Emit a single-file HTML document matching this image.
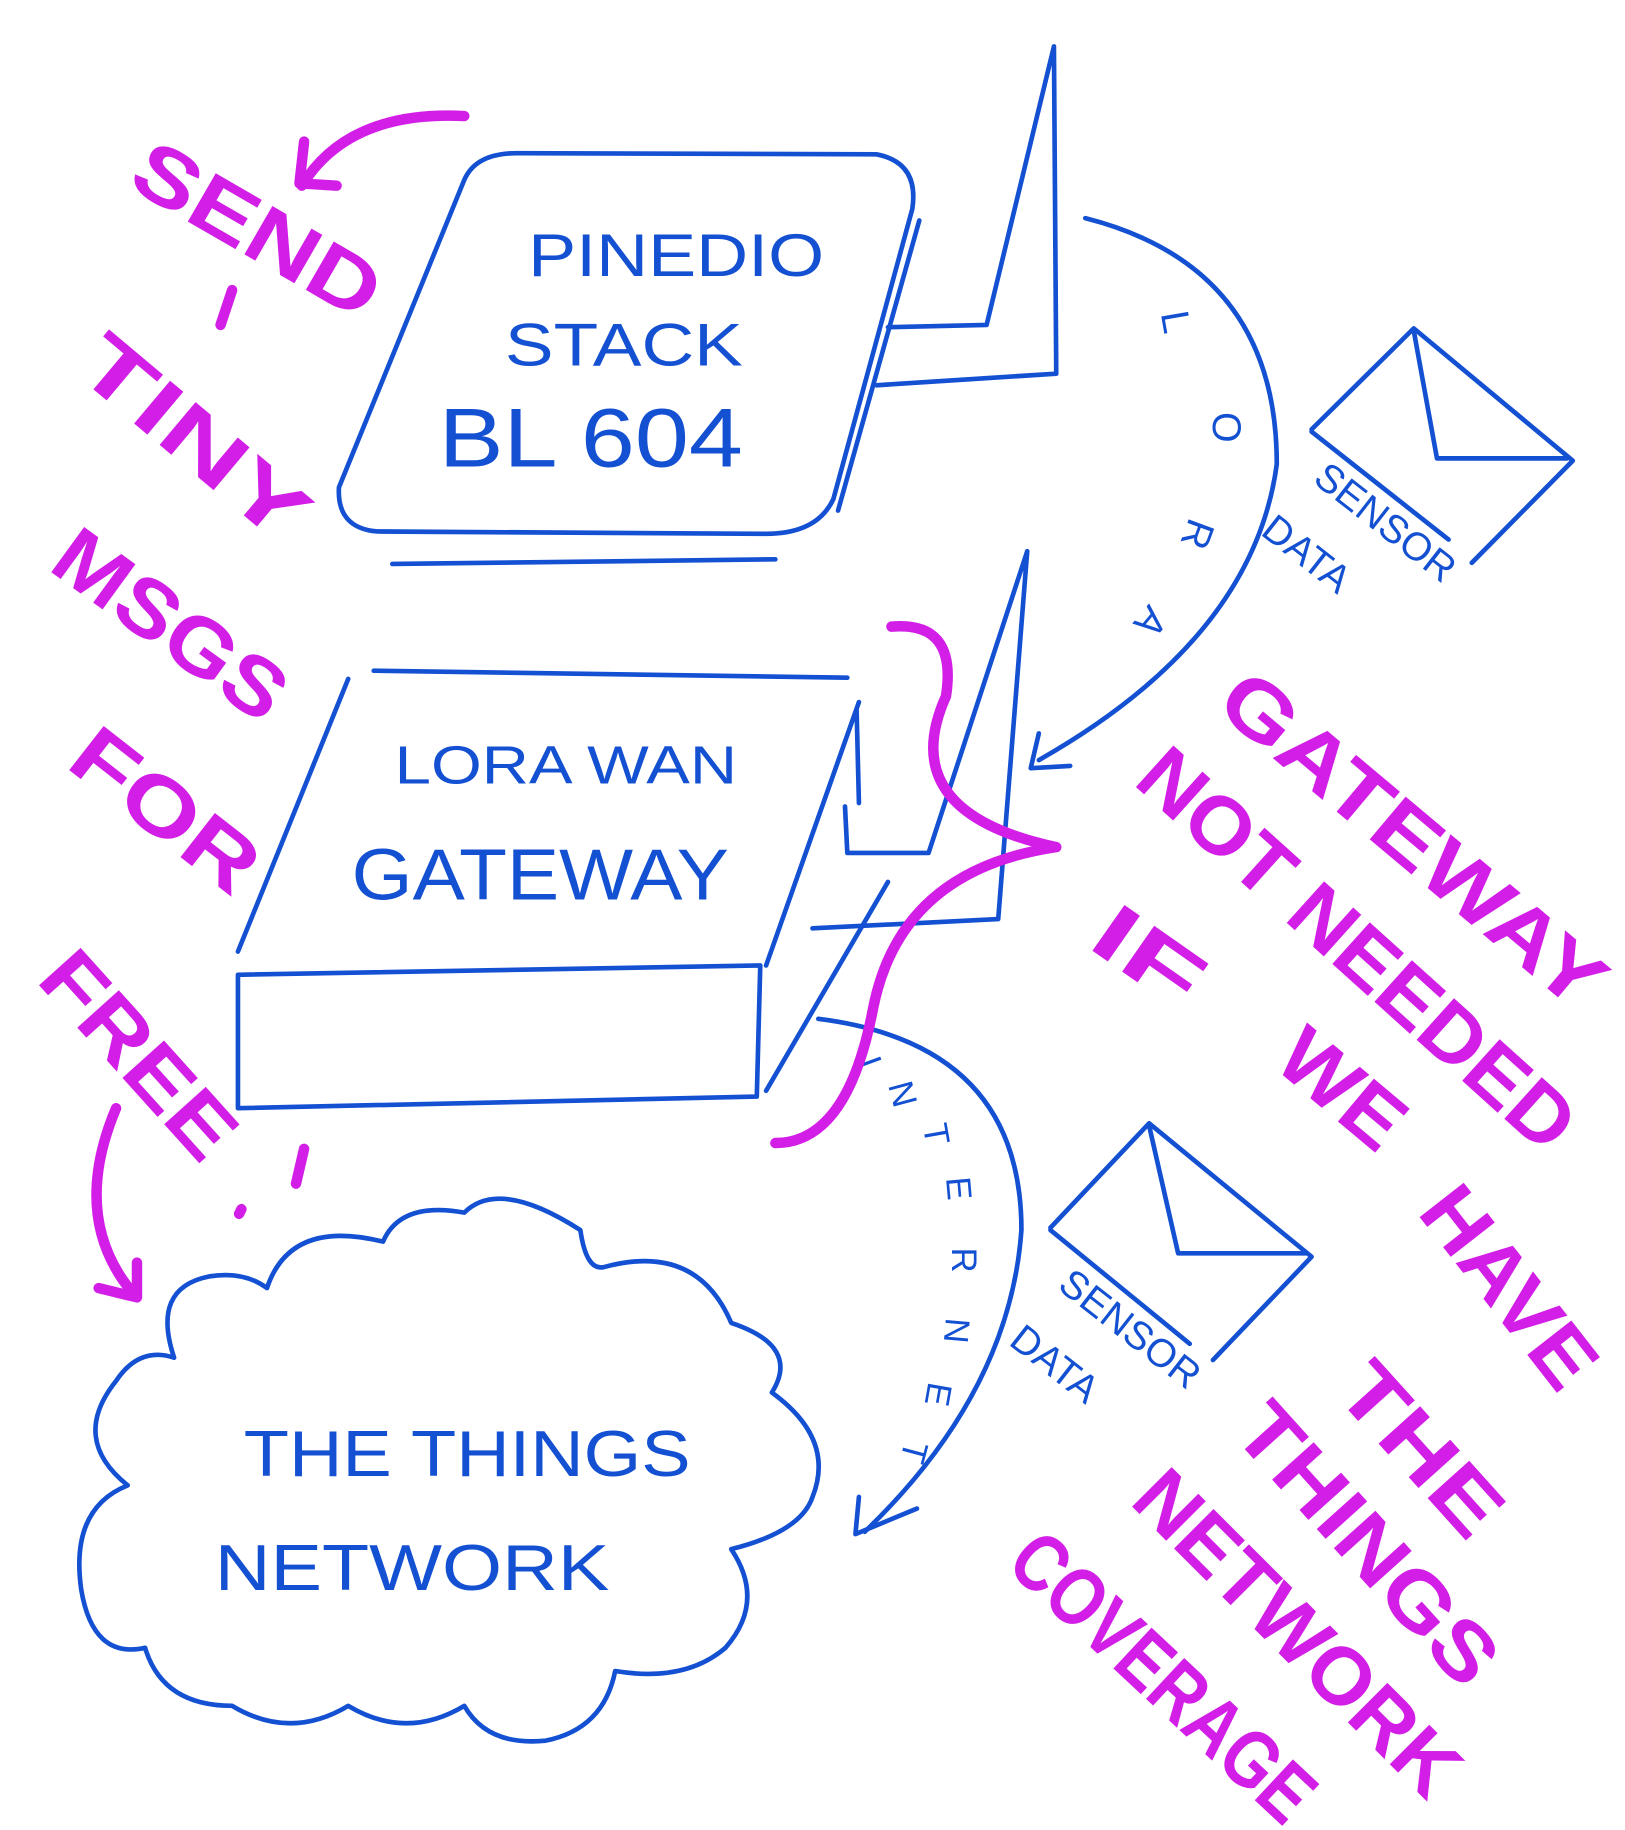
<!DOCTYPE html>
<html><head><meta charset="utf-8"><style>
html,body{margin:0;padding:0;background:#fff;width:1625px;height:1830px;overflow:hidden}
svg{display:block}
.b{fill:none;stroke:#1450d2;stroke-width:4;stroke-linecap:round;stroke-linejoin:round}
.m{fill:none;stroke:#d21ee6;stroke-width:9;stroke-linecap:round;stroke-linejoin:round}
.bt{fill:#1450d2;font-family:"Liberation Sans",sans-serif;font-weight:normal}
.mt{fill:#d21ee6;font-family:"Liberation Sans",sans-serif;font-weight:bold}
</style></head><body>
<svg width="1625" height="1830" viewBox="0 0 1400 1577" preserveAspectRatio="none">
<path class="b" d="M400 155 Q410 132 445 132 L755 133 Q792 140 786 180 L718 430 Q704 460 660 460 L325 458 Q290 455 292 420 Z"/>
<path class="b" d="M792 190 L722 440"/>
<path class="b" d="M338 486 L668 482"/>
<path class="b" d="M765 282 L850 280 L908 40 L910 322 L755 332"/>
<path class="b" d="M322 578 L730 584"/>
<path class="b" d="M300 585 L205 820"/>
<path class="b" d="M205 840 L655 832 L652 945 L205 955 Z"/>
<path class="b" d="M740 605 L660 832"/>
<path class="b" d="M738 612 L740 692"/>
<path class="b" d="M728 695 L730 735 L800 735 L885 475 L860 792 L700 800"/>
<path class="b" d="M765 760 L660 940"/>
<path class="b" d="M935 188 Q1100 230 1100 400 Q1080 550 895 655"/>
<path class="b" d="M895 632 L888 662 L922 660"/>
<path class="b" d="M705 878 Q880 900 880 1060 Q870 1200 745 1320"/>
<path class="b" d="M740 1290 L737 1322 L790 1300"/>
<path class="b" d="M1130 370 L1218 283 L1355 397 L1268 485"/>
<path class="b" d="M1130 372 L1248 465"/>
<path class="b" d="M1218 285 L1238 395 L1350 395"/>
<path class="b" d="M905 1058 L990 968 L1130 1083 L1045 1172"/>
<path class="b" d="M905 1060 L1025 1158"/>
<path class="b" d="M990 970 L1015 1080 L1125 1080"/>
<path class="b" d="M230 1110 Q250 1050 330 1070 Q345 1035 400 1045 Q430 1015 500 1060 Q505 1095 520 1092 Q600 1070 630 1140 Q690 1160 665 1200 Q720 1240 700 1290 Q690 1320 630 1335 Q660 1380 625 1420 Q590 1450 530 1440 Q520 1490 470 1500 Q420 1505 400 1470 Q350 1500 300 1470 Q250 1500 200 1470 Q140 1470 125 1420 Q80 1430 70 1370 Q60 1300 110 1280 Q60 1240 100 1190 Q120 1160 150 1170 Q130 1110 180 1100 Q210 1095 230 1110"/>
<text class="bt" x="455" y="238" font-size="52" textLength="255" lengthAdjust="spacingAndGlyphs">PINEDIO</text>
<text class="bt" x="435" y="315" font-size="52" textLength="205" lengthAdjust="spacingAndGlyphs">STACK</text>
<text class="bt" x="378" y="402" font-size="72" textLength="262" lengthAdjust="spacingAndGlyphs">BL 604</text>
<text class="bt" x="340" y="675" font-size="46" textLength="295" lengthAdjust="spacingAndGlyphs">LORA WAN</text>
<text class="bt" x="303" y="775" font-size="62" textLength="325" lengthAdjust="spacingAndGlyphs">GATEWAY</text>
<text class="bt" x="210" y="1272" font-size="56" textLength="385" lengthAdjust="spacingAndGlyphs">THE  THINGS</text>
<text class="bt" x="185" y="1370" font-size="56" textLength="340" lengthAdjust="spacingAndGlyphs">NETWORK</text>
<text class="bt" font-size="34" transform="translate(1000 270) rotate(80)">L</text>
<text class="bt" font-size="34" transform="translate(1045 355) rotate(90)">O</text>
<text class="bt" font-size="34" transform="translate(1025 445) rotate(110)">R</text>
<text class="bt" font-size="34" transform="translate(990 520) rotate(130)">A</text>
<text class="bt" font-size="30" transform="translate(738 915) rotate(70)">I</text>
<text class="bt" font-size="30" transform="translate(765 935) rotate(75)">N</text>
<text class="bt" font-size="30" transform="translate(795 970) rotate(80)">T</text>
<text class="bt" font-size="30" transform="translate(815 1015) rotate(85)">E</text>
<text class="bt" font-size="30" transform="translate(820 1075) rotate(90)">R</text>
<text class="bt" font-size="30" transform="translate(815 1135) rotate(95)">N</text>
<text class="bt" font-size="30" transform="translate(800 1190) rotate(100)">E</text>
<text class="bt" font-size="30" transform="translate(780 1240) rotate(105)">T</text>
<text class="bt" font-size="34" transform="translate(1130 415) rotate(38)">SENSOR</text>
<text class="bt" font-size="34" transform="translate(1085 460) rotate(38)">DATA</text>
<text class="bt" font-size="34" transform="translate(910 1110) rotate(38)">SENSOR</text>
<text class="bt" font-size="34" transform="translate(868 1158) rotate(38)">DATA</text>
<path class="m" d="M400 100 Q300 95 260 160"/>
<path class="m" d="M262 122 L258 158 L290 160"/>
<path class="m" d="M768 540 Q825 535 815 600 Q770 700 910 730 Q775 750 752 870 Q730 985 668 985"/>
<path class="m" d="M100 955 Q60 1050 115 1115"/>
<path class="m" d="M85 1110 L118 1118 L118 1088"/>
<path class="m" d="M200 250 L190 280"/>
<path class="m" d="M262 990 L255 1020 M208 1042 L206 1046"/>
<g class="mt" font-size="70" lengthAdjust="spacingAndGlyphs">
<text transform="translate(108 160) rotate(30)" textLength="235" lengthAdjust="spacingAndGlyphs">SEND</text>
<text transform="translate(62 320) rotate(40)" textLength="235" lengthAdjust="spacingAndGlyphs">TINY</text>
<text transform="translate(40 490) rotate(36)" textLength="230" lengthAdjust="spacingAndGlyphs">MSGS</text>
<text transform="translate(55 660) rotate(38)" textLength="185" lengthAdjust="spacingAndGlyphs">FOR</text>
<text transform="translate(30 845) rotate(48)" textLength="215" lengthAdjust="spacingAndGlyphs">FREE</text>
<text transform="translate(1045 610) rotate(40)" textLength="410" lengthAdjust="spacingAndGlyphs">GATEWAY</text>
<text transform="translate(975 675) rotate(42)" textLength="480" lengthAdjust="spacingAndGlyphs">NOT NEEDED</text>
<text transform="translate(935 815) rotate(35)" textLength="100" lengthAdjust="spacingAndGlyphs">IF</text>
<text transform="translate(1095 918) rotate(40)" textLength="120" lengthAdjust="spacingAndGlyphs">WE</text>
<text transform="translate(1220 1045) rotate(52)" textLength="200" lengthAdjust="spacingAndGlyphs">HAVE</text>
<text transform="translate(1148 1200) rotate(48)" textLength="175" lengthAdjust="spacingAndGlyphs">THE</text>
<text transform="translate(1060 1235) rotate(48)" textLength="300" lengthAdjust="spacingAndGlyphs">THINGS</text>
<text transform="translate(972 1295) rotate(45)" textLength="365" lengthAdjust="spacingAndGlyphs">NETWORK</text>
<text transform="translate(865 1350) rotate(43)" textLength="330" lengthAdjust="spacingAndGlyphs">COVERAGE</text>
</g>
</svg>
</body></html>
